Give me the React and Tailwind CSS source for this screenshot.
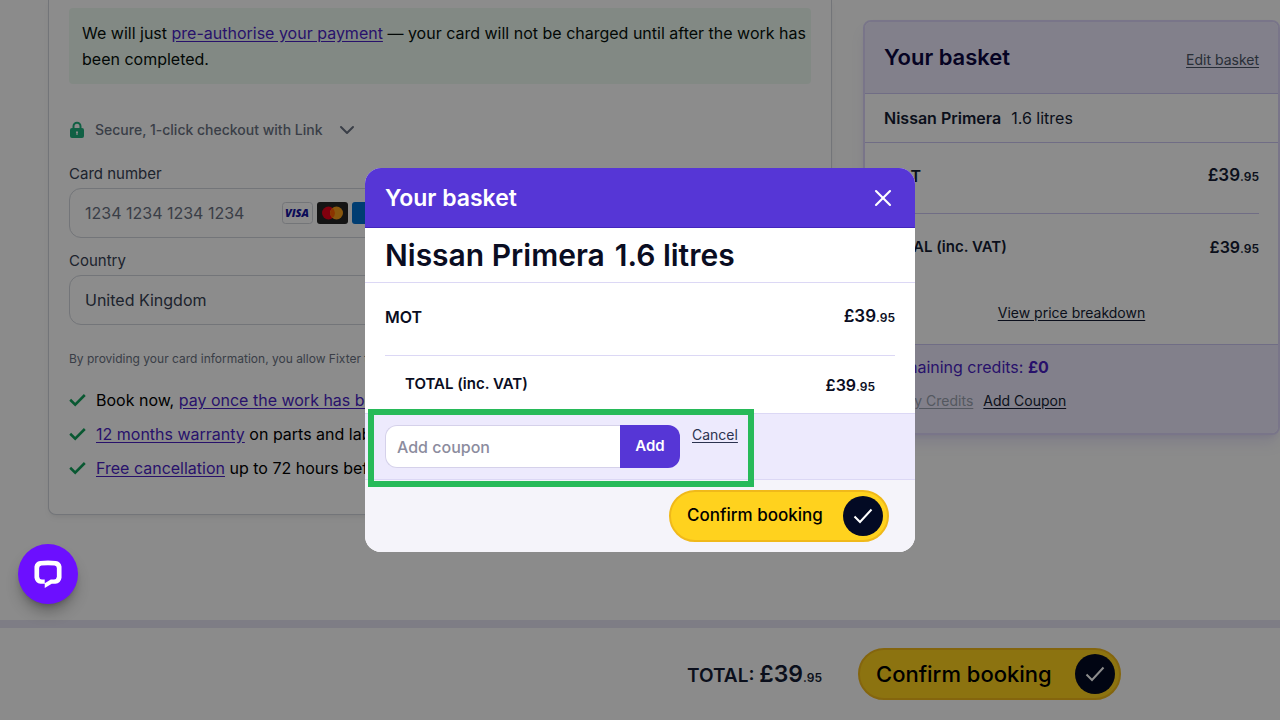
import { ChevronDown, X } from "lucide-react";

function Price({ pounds, pence, className = "text-base" }) {
  return (
    <span className={`font-semibold ${className}`}>
      {pounds}
      <span className="text-xs">.{pence}</span>
    </span>
  );
}

function PurpleLink({ children }) {
  return (
    <a href="#" className="text-[#4a1fc4] underline underline-offset-2">
      {children}
    </a>
  );
}

function LockIcon() {
  return (
    <svg width="16" height="18" viewBox="0 0 16 18" aria-hidden="true">
      <path d="M4.5 8V5.2a3.5 3.5 0 0 1 7 0V8" fill="none" stroke="#1eb07c" strokeWidth="2" />
      <rect x="1" y="7" width="14" height="10" rx="2" fill="#1eb07c" />
      <path d="M8 10.2a1.1 1.1 0 0 1 .6 2V14H7.4v-1.8a1.1 1.1 0 0 1 .6-2z" fill="#fff" />
    </svg>
  );
}

function CardLogos() {
  return (
    <span className="flex gap-1" aria-hidden="true">
      <svg width="31" height="22" viewBox="0 0 31 22">
        <rect x="0.5" y="0.5" width="30" height="21" rx="3" fill="#fff" stroke="#d1d5db" />
        <text x="15" y="15" textAnchor="middle" fontFamily="Open Sans, sans-serif" fontSize="11" fontWeight="800" fontStyle="italic" fill="#1414a0">VISA</text>
      </svg>
      <svg width="31" height="22" viewBox="0 0 31 22">
        <rect width="31" height="22" rx="3" fill="#252525" />
        <circle cx="11.5" cy="11" r="6.5" fill="#eb001b" />
        <circle cx="19.5" cy="11" r="6.5" fill="#f79e1b" />
        <path d="M15.5 5.9a6.5 6.5 0 0 1 0 10.2a6.5 6.5 0 0 1 0-10.2z" fill="#ff5f00" />
      </svg>
      <svg width="31" height="22" viewBox="0 0 31 22">
        <rect width="31" height="22" rx="3" fill="#006fcf" />
      </svg>
    </span>
  );
}

function ConfirmButton({ className }) {
  return (
    <button
      type="button"
      className={`flex h-[52px] items-center justify-between rounded-full border-2 border-[#f0b91a] bg-[#ffd21e] pr-1 pl-4 font-medium text-black ${className}`}
    >
      Confirm booking
      <span className="flex size-10 items-center justify-center rounded-full bg-[#030a24]">
        <svg width="20" height="16" viewBox="0 0 20 16" fill="none" stroke="#fff" strokeWidth="2" aria-hidden="true">
          <path d="M1.5 8.5L7 14L18.5 1.5" />
        </svg>
      </span>
    </button>
  );
}

function Perk({ children }) {
  return (
    <li className="flex gap-[10px]">
      <svg
        width="17"
        height="14"
        viewBox="0 0 17 14"
        fill="none"
        stroke="#12a15b"
        strokeWidth="2.6"
        className="mt-[5px] shrink-0"
        aria-hidden="true"
      >
        <path d="M1.2 6.8l5 4.8L15.8 2" />
      </svg>
      <span>{children}</span>
    </li>
  );
}

function PaymentCard() {
  return (
    <section className="min-w-0 flex-1 rounded-b-lg border border-t-0 border-gray-300 bg-white px-5 pt-2 pb-[34px] shadow-md shadow-black/5">
      <p className="rounded-sm bg-[#edfaf1] py-3 pl-[13px] leading-[26px] text-[#06100b]">
        We will just <PurpleLink>pre-authorise your payment</PurpleLink> — your card will not be charged until after the
        work has been completed.
      </p>

      <button type="button" className="mt-[34px] flex items-center text-[14px] leading-6 font-medium text-gray-500">
        <LockIcon />
        <span className="ml-[10px]">Secure, 1-click checkout with Link</span>
        <ChevronDown size={24} strokeWidth={2} className="ml-3" />
      </button>

      <label htmlFor="card-number" className="mt-[22px] block text-[15px] leading-5 text-gray-700">
        Card number
      </label>
      <div className="mt-1 flex h-[50px] items-center gap-8 rounded-xl border border-gray-300 pl-[15px]">
        <input
          id="card-number"
          inputMode="numeric"
          placeholder="1234 1234 1234 1234"
          className="w-[165px] outline-none placeholder:text-gray-500"
        />
        <CardLogos />
      </div>

      <label htmlFor="country" className="mt-[13px] block text-[15px] leading-5 text-gray-700">
        Country
      </label>
      <select
        id="country"
        className="mt-1 block h-[50px] w-full appearance-none rounded-xl border border-gray-300 px-[15px] text-gray-700"
      >
        <option>United Kingdom</option>
      </select>

      <p className="mt-6 truncate text-[12px] leading-5 text-gray-500">
        By providing your card information, you allow Fixter to charge your card for future payments.
      </p>

      <ul className="mt-[19px] flex flex-col gap-[10px] leading-6 text-black">
        <Perk>
          Book now, <PurpleLink>pay once the work has been done</PurpleLink>
        </Perk>
        <Perk>
          <PurpleLink>12 months warranty</PurpleLink> on parts and labour
        </Perk>
        <Perk>
          <PurpleLink>Free cancellation</PurpleLink> up to 72 hours before
        </Perk>
      </ul>
    </section>
  );
}

function BasketCard() {
  return (
    <aside className="mt-5 w-[417px] shrink-0 self-start overflow-hidden rounded-lg border-2 border-[#dcd6fa] bg-white text-[#141c33] shadow-lg shadow-[#6d5ad0]/15">
      <header className="flex h-[72px] items-center justify-between border-b border-[#cdc6f2] bg-[#edeafd] px-[19px]">
        <h2 className="text-[22px] font-semibold text-[#0b0640]">Your basket</h2>
        <a href="#" className="mt-1 text-[14px] text-gray-600 underline underline-offset-2">
          Edit basket
        </a>
      </header>
      <p className="flex h-[49px] items-center gap-[10px] border-b border-[#cdc6f2] px-[19px] text-base">
        <b className="font-semibold">Nissan Primera</b> 1.6 litres
      </p>
      <div className="px-[19px]">
        <div className="flex h-[71px] items-center justify-between border-b border-[#cdc6f2] pb-1">
          <span className="font-semibold">MOT</span>
          <Price pounds="£39" pence="95" className="text-[17px]" />
        </div>
        <div className="flex h-[66px] items-center justify-between">
          <span className="text-[15px] font-semibold">TOTAL (inc. VAT)</span>
          <Price pounds="£39" pence="95" />
        </div>
        <div className="flex h-16 items-center justify-center">
          <a href="#" className="text-[14px] underline underline-offset-2">
            View price breakdown
          </a>
        </div>
      </div>
      <footer className="border-t border-[#cdc6f2] bg-[#edeafd] px-[19px] pt-[10px] pb-[22px]">
        <p className="text-base leading-6 text-[#4a1fc4]">
          Remaining credits: <b className="font-bold">£0</b>
        </p>
        <div className="mt-3 flex gap-[10px] text-[14px] leading-5">
          <a href="#" className="text-gray-400 underline underline-offset-2">
            Apply Credits
          </a>
          <a href="#" className="underline underline-offset-2">
            Add Coupon
          </a>
        </div>
      </footer>
    </aside>
  );
}

function BasketDialog() {
  return (
    <div
      role="dialog"
      aria-modal="true"
      aria-labelledby="dialog-title"
      className="w-[550px] rounded-2xl bg-white text-[#0a0d22]"
    >
      <header className="flex h-[60px] items-center justify-between rounded-t-2xl border-b border-[#4326bd] bg-[#5636d6] pt-px pr-[18px] pl-5 text-white">
        <h2 id="dialog-title" className="text-[23px] font-semibold">
          Your basket
        </h2>
        <button type="button" aria-label="Close">
          <X size={28} strokeWidth={1.8} />
        </button>
      </header>

      <h3 className="flex h-[55px] items-center gap-[10px] border-b border-[#dcd8f5] px-5 text-3xl font-semibold">
        <span>Nissan Primera</span>
        <span>1.6 litres</span>
      </h3>

      <div className="px-5">
        <div className="flex h-[73px] items-center justify-between border-b border-[#dcd8f5] pb-1">
          <span className="font-semibold">MOT</span>
          <Price pounds="£39" pence="95" className="text-[17px]" />
        </div>
        <div className="flex h-[57px] items-center justify-between px-5">
          <span className="text-[15px] font-semibold">TOTAL (inc. VAT)</span>
          <Price pounds="£39" pence="95" />
        </div>
      </div>

      <form className="relative flex h-[67px] items-start border-y border-[#dcd8f5] bg-[#edeafd] px-5 pt-[11px]">
        <input
          aria-label="Add coupon"
          placeholder="Add coupon"
          className="h-[43px] w-[235px] rounded-l-xl border border-r-0 border-[#d5d1ea] bg-white px-[11px] font-medium outline-none placeholder:text-[#8c8c9e]"
        />
        <button type="button" className="h-[43px] w-[60px] rounded-r-xl bg-[#5636d6] text-[15px] font-semibold text-white">
          Add
        </button>
        <a href="#" className="ml-3 text-[14px] leading-5 text-[#2c3350] underline underline-offset-2">
          Cancel
        </a>
        <div className="pointer-events-none absolute -top-[5px] left-[3px] h-[78px] w-[386px] border-[6px] border-[#27ba59]" />
      </form>

      <footer className="flex h-[72px] items-start justify-end rounded-b-2xl bg-[#f5f4fa] pt-[10px] pr-[26px]">
        <ConfirmButton className="w-[220px] text-[17px]" />
      </footer>
    </div>
  );
}

export default function App() {
  return (
    <div className="relative flex h-screen flex-col overflow-hidden bg-[#fdfdfd] font-['Inter',sans-serif]">
      <main className="flex flex-1 items-start gap-[31px] pl-12">
        <PaymentCard />
        <BasketCard />
      </main>

      <footer className="flex h-[100px] shrink-0 items-center justify-end gap-9 border-t-8 border-[#e6e3f2] bg-[#fdfdfd] pr-[159px]">
        <p className="text-[19px] font-semibold text-[#141c33]">
          TOTAL: <Price pounds="£39" pence="95" className="text-[23px]" />
        </p>
        <ConfirmButton className="w-[263px] text-[22px]" />
      </footer>

      <div className="absolute inset-0 flex items-center justify-center bg-black/45">
        <BasketDialog />
      </div>

      <button
        type="button"
        aria-label="Open chat"
        className="absolute bottom-[116px] left-[18px] flex size-[60px] items-center justify-center rounded-full bg-[#6c0fff] shadow-lg shadow-black/30"
      >
        <svg width="28" height="28" viewBox="0 0 30 30" aria-hidden="true">
          <path
            fill="#fff"
            fillRule="evenodd"
            d="M6.5 1Q15 0 23.5 1Q28.5 1.5 29.5 7V19Q28.5 25 23 25.5H19L11.5 30V25.5H7Q1.5 25 .5 19V7Q1.5 1.5 6.5 1zM8 6Q15 5.3 22 6Q24.3 6.2 24.5 8.5V18Q24.3 20.8 21.5 21H18L11.5 25V21H8.5Q5.7 20.8 5.5 18V8.5Q5.7 6.2 8 6z"
          />
        </svg>
      </button>
    </div>
  );
}
